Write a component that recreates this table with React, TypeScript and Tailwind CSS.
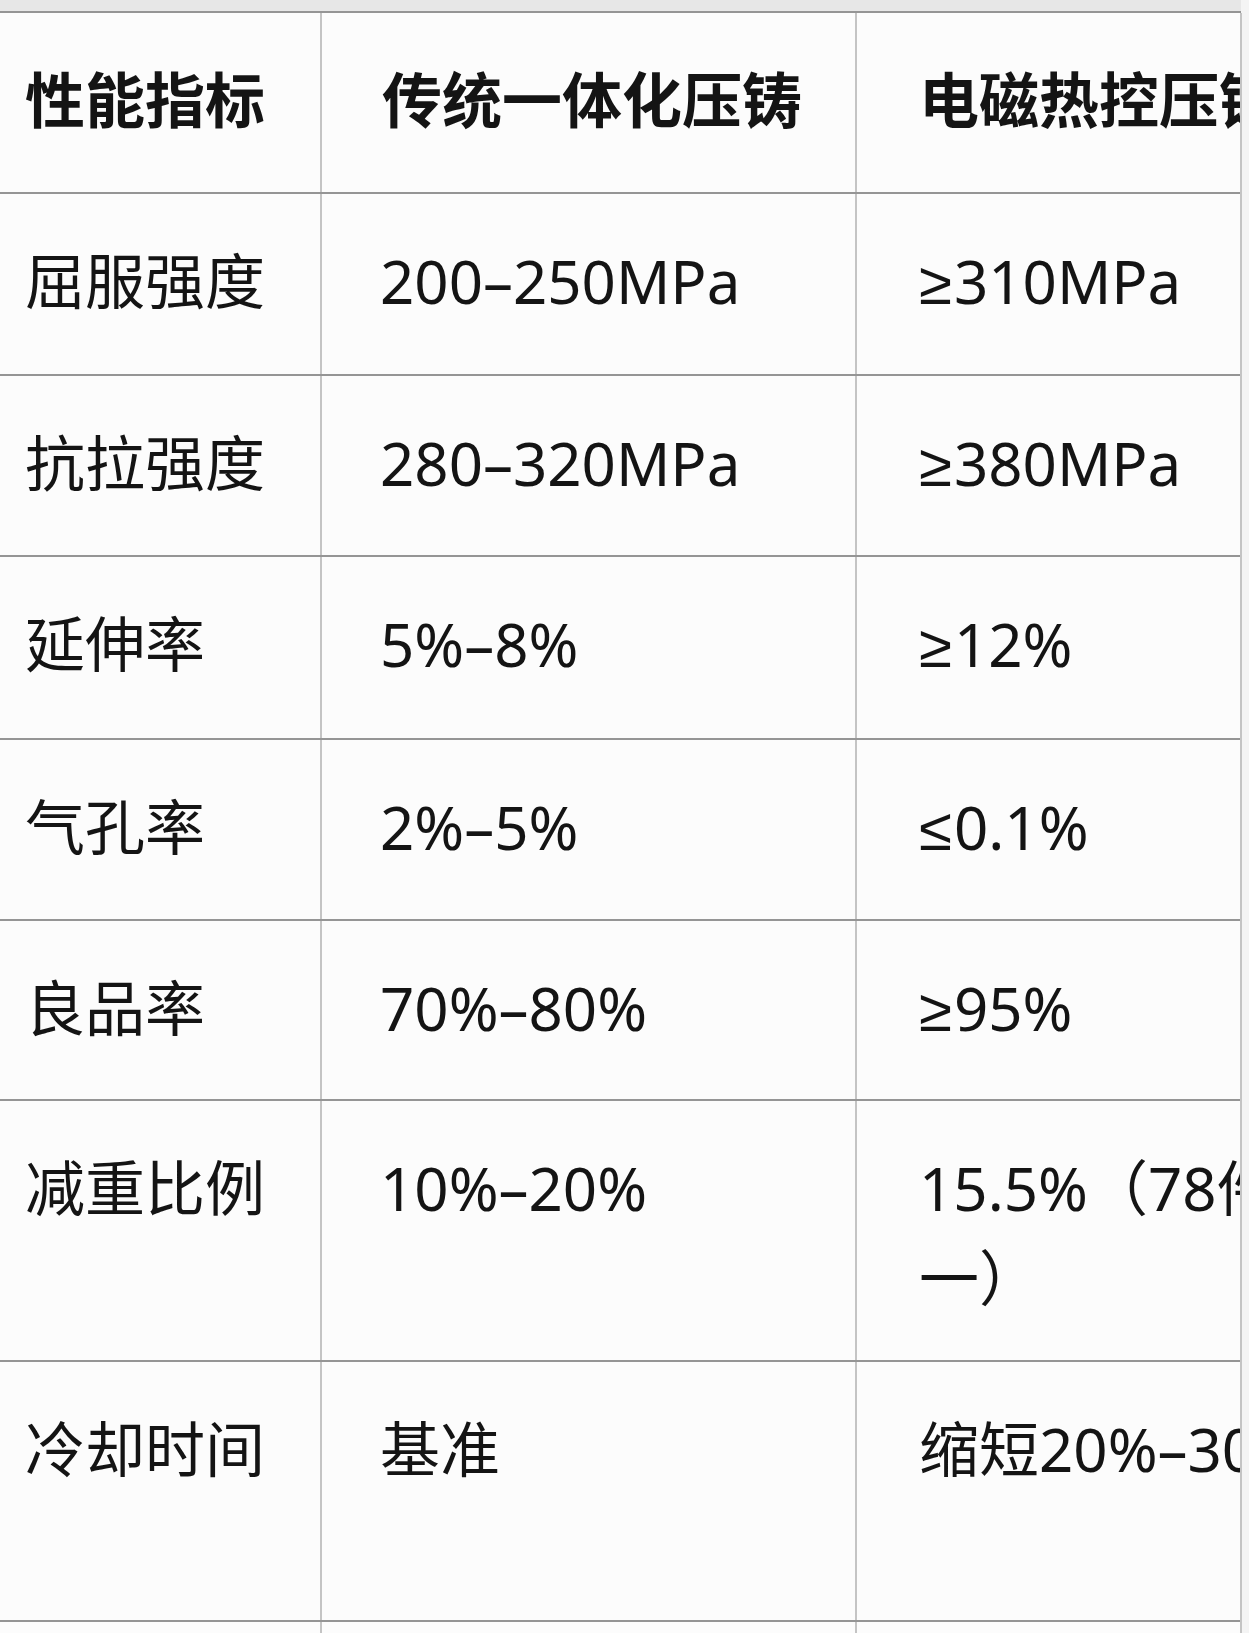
const rows: { h: string; name: string; a: string; b: string[] }[] = [
  { h: 'h-[182px]', name: '屈服强度', a: '200–250MPa', b: ['≥310MPa'] },
  { h: 'h-[181px]', name: '抗拉强度', a: '280–320MPa', b: ['≥380MPa'] },
  { h: 'h-[183px]', name: '延伸率', a: '5%–8%', b: ['≥12%'] },
  { h: 'h-[181px]', name: '气孔率', a: '2%–5%', b: ['≤0.1%'] },
  { h: 'h-[180px]', name: '良品率', a: '70%–80%', b: ['≥95%'] },
  { h: 'h-[261px]', name: '减重比例', a: '10%–20%', b: ['15.5%（78件合', '一）'] },
  { h: 'h-[260px]', name: '冷却时间', a: '基准', b: ['缩短20%–30%'] },
]

const font = { fontFamily: '"Noto Sans", "Noto Sans CJK SC", sans-serif' }

// the ≥ / ≤ in the screenshot are narrow, so give them a narrower face
function Cell({ text }: { text: string }) {
  const sign = text[0] === '≥' || text[0] === '≤'
  if (!sign) return <div>{text}</div>
  return (
    <div>
      <span className="font-['Liberation_Sans'] mr-[2px]">{text[0]}</span>
      {text.slice(1)}
    </div>
  )
}

export default function App() {
  return (
    <div className="w-[1249px] h-[1633px] overflow-hidden bg-[#f4f4f4] text-[#141414]" style={font}>
      <div className="h-[13px] bg-[#e7e7e7] border-b-2 border-[#959595] w-[1241px]" />
      <div className="w-[1242px] border-r-2 border-[#c4c4c4] bg-[#fcfcfc] overflow-hidden">
        {/* header */}
        <div className="grid grid-cols-[322px_535px_600px] h-[181px] border-b-2 border-[#959595]">
          <div className="border-r-2 border-[#c4c4c4] pl-[25px] pt-[42px] text-[60px] leading-[90px] font-bold">性能指标</div>
          <div className="border-r-2 border-[#c4c4c4] pl-[60px] pt-[42px] text-[60px] leading-[90px] font-bold">传统一体化压铸</div>
          <div className="pl-[62px] pt-[42px] text-[60px] leading-[90px] font-bold whitespace-nowrap">电磁热控压铸</div>
        </div>

        {rows.map((r) => (
          <div key={r.name} className={`grid grid-cols-[322px_535px_600px] ${r.h} border-b-2 border-[#959595]`}>
            <div className="border-r-2 border-[#c4c4c4] pl-[25px] pt-[42px] text-[60px] leading-[90px]">{r.name}</div>
            <div className="border-r-2 border-[#c4c4c4] pl-[58px] pt-[42px] text-[60px] leading-[90px]">{r.a}</div>
            <div className="pl-[62px] pt-[42px] text-[60px] leading-[90px] whitespace-nowrap">
              {r.b.map((line) => (
                <Cell key={line} text={line} />
              ))}
            </div>
          </div>
        ))}

        <div className="grid grid-cols-[322px_535px_600px] h-[20px]">
          <div className="border-r-2 border-[#c4c4c4]" />
          <div className="border-r-2 border-[#c4c4c4]" />
          <div />
        </div>
      </div>
    </div>
  )
}
